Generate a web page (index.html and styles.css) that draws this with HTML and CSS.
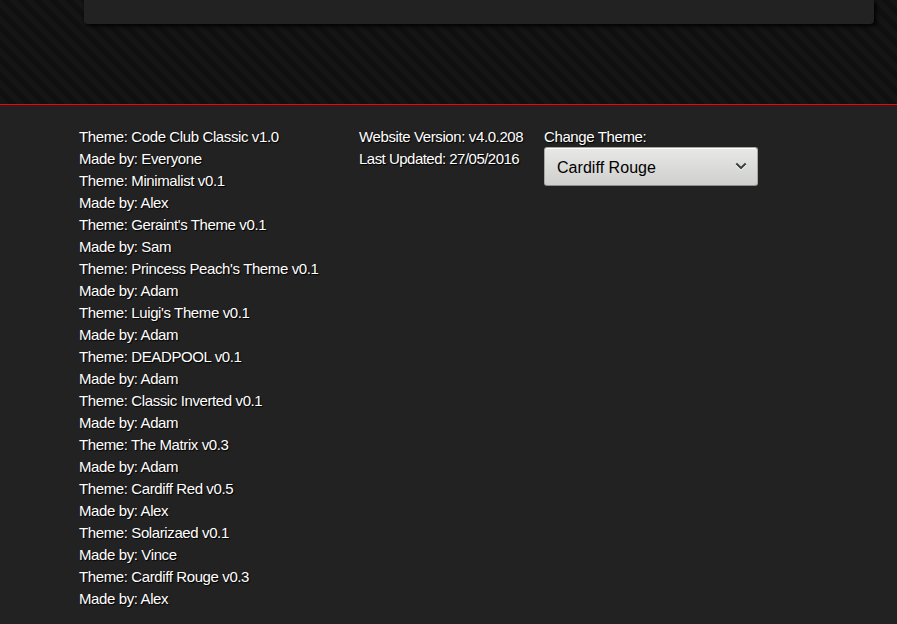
FILE: index.html
```html
<!DOCTYPE html>
<html lang="en">
<head>
<meta charset="utf-8">
<title>Code Club</title>
<link rel="stylesheet" href="styles.css">
</head>
<body>
<main class="page"><div class="panel"></div></main>
<footer class="footer">
  <div class="themes">
    <p>Theme: Code Club Classic v1.0</p><p>Made by: Everyone</p>
    <p>Theme: Minimalist v0.1</p><p>Made by: Alex</p>
    <p>Theme: Geraint's Theme v0.1</p><p>Made by: Sam</p>
    <p>Theme: Princess Peach's Theme v0.1</p><p>Made by: Adam</p>
    <p>Theme: Luigi's Theme v0.1</p><p>Made by: Adam</p>
    <p>Theme: DEADPOOL v0.1</p><p>Made by: Adam</p>
    <p>Theme: Classic Inverted v0.1</p><p>Made by: Adam</p>
    <p>Theme: The Matrix v0.3</p><p>Made by: Adam</p>
    <p>Theme: Cardiff Red v0.5</p><p>Made by: Alex</p>
    <p>Theme: Solarizaed v0.1</p><p>Made by: Vince</p>
    <p>Theme: Cardiff Rouge v0.3</p><p>Made by: Alex</p>
  </div>
  <div class="version"><p>Website Version: v4.0.208</p><p class="date">Last Updated: 27/05/2016</p></div>
  <div class="chooser">
    <p>Change Theme:</p>
    <div class="select"><span>Cardiff Rouge</span>
      <svg class="arrow" width="12" height="9" viewBox="0 0 12 9"><path d="M1.3 2.5 L6 7 L10.7 2.5" fill="none" stroke="#fff" stroke-width="2"/><path d="M1.3 1.5 L6 6 L10.7 1.5" fill="none" stroke="#3b4142" stroke-width="2"/></svg>
    </div>
  </div>
</footer>
</body>
</html>
```

FILE: styles.css
```css
* { box-sizing: border-box; }
body {
  margin: 0;
  height: 624px;
  overflow: hidden;
  background: #222;
  color: #fff;
  font: 15px/22px "Liberation Sans", Arial, sans-serif;
  letter-spacing: -0.39px;
  text-shadow: 1px 1px 1px #000;
}
p { margin: 0; white-space: nowrap; }
.page {
  height: 104px;
  padding-left: 84px;
  background: linear-gradient(45deg, #101010 25%, #151515 25%, #151515 50%, #101010 50%, #101010 75%, #151515 75%) 0 0 / 16px 16px;
}
.panel {
  width: 790px;
  height: 24px;
  background: #222;
  border-radius: 0 0 4px 4px;
  box-shadow: 2px 2px 4px #000;
}
.footer {
  display: flex;
  height: 520px;
  padding: 21px 0 0 79px;
  border-top: 1px solid #f00;
  background: #222;
}
.themes { width: 280px; }
.version { width: 185px; }
.date { letter-spacing: -0.52px; }
.chooser { width: 214px; }
.select {
  display: flex;
  align-items: center;
  justify-content: space-between;
  height: 39px;
  margin-top: -1px;
  padding: 2px 10px 0 12px;
  border: 1px solid #a6a6a3;
  border-bottom-color: #8e8e8b;
  border-radius: 3px;
  background: linear-gradient(#e8e8e6, #cfcfcd);
  box-shadow: inset 0 1px #fff;
  color: #000;
  font-size: 16px;
  letter-spacing: 0.04px;
  text-shadow: none;
}
.arrow { margin-top: -3px; }
```
